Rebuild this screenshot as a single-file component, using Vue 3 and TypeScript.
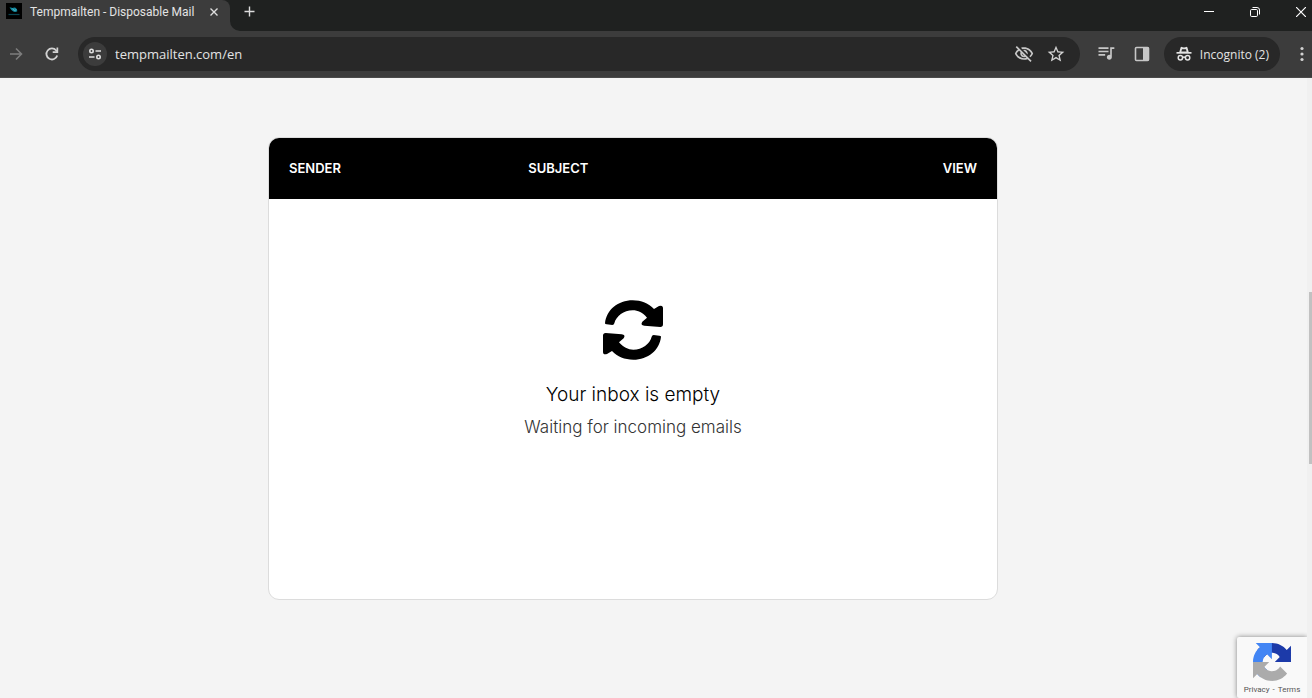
<script setup lang="ts">
import { ref } from 'vue'

const address = ref('tempmailten.com/en')
const tabTitle = 'Tempmailten - Disposable Mail'
const incognitoCount = 2
</script>

<template>
  <div class="browser">
    <header class="tabs">
      <div class="tab">
        <svg class="favicon" viewBox="0 0 16 16" aria-hidden="true">
          <rect width="16" height="16" fill="#000" />
          <path d="M3.500 4.200l3.200.8Q8 4 9.500 4.800 11.500 6 11.300 8.200 9.500 9.600 7.300 8.600 5 7 3.500 4.200z" fill="#128aa0" />
          <path d="M6.500 5.800l2 1.800 1.800-1" fill="none" stroke="#7cc4cf" stroke-width=".7" />
          <path d="M2.500 11.500h11" stroke="#0a4450" stroke-width="1.200" />
        </svg>
        <span class="title">{{ tabTitle }}</span>
        <button class="plain close-tab" type="button" aria-label="Close tab">
          <svg width="8" height="8" viewBox="0 0 8 8"><path d="M.5.5l7 7M7.500.5l-7 7" stroke="#dedede" stroke-width="1.400" /></svg>
        </button>
        <svg class="flare" width="10" height="10" viewBox="0 0 10 10" aria-hidden="true"><path d="M0 0a10 10 0 0 0 10 10H0z" fill="#3c3c3c" /></svg>
      </div>
      <button class="plain new-tab" type="button" aria-label="New tab">
        <svg width="12" height="12" viewBox="0 0 12 12"><path d="M5.500.5v10M.5 5.500h10" stroke="#dcdcdc" stroke-width="1.400" /></svg>
      </button>
      <div class="window-controls">
        <button class="plain" type="button" aria-label="Minimize">
          <svg width="10" height="10" viewBox="0 0 10 10"><path d="M0 4.500h10" stroke="#fff" /></svg>
        </button>
        <button class="plain" type="button" aria-label="Restore">
          <svg width="10" height="10" viewBox="0 0 10 10" fill="none" stroke="#fff"><rect x=".5" y="2.500" width="7" height="7" rx="1.200" /><path d="M2.500.5H7a2.500 2.500 0 0 1 2.500 2.500v4.500" /></svg>
        </button>
        <button class="plain" type="button" aria-label="Close window">
          <svg width="10" height="10" viewBox="0 0 10 10"><path d="M0 0l10 10M10 0L0 10" stroke="#fff" stroke-width="1.200" /></svg>
        </button>
      </div>
    </header>

    <nav class="toolbar" aria-label="Browser toolbar">
      <button class="plain tool" type="button" aria-label="Forward" disabled>
        <svg width="16" height="16" viewBox="0 0 16 16" fill="none" stroke="#7d7d7d" stroke-width="1.600"><path d="M2 8h11M8 2.500L13.500 8 8 13.500" /></svg>
      </button>
      <button class="plain tool reload" type="button" aria-label="Reload">
        <svg width="16" height="16" viewBox="0 0 16 16"><path d="M13.200 9.500A5.500 5.500 0 1 1 12.200 4.500L13 5.500" fill="none" stroke="#d2d2d2" stroke-width="1.800" /><path d="M14.200 1.500v5.500H8.700V5.300h3.800V1.500z" fill="#d2d2d2" /></svg>
      </button>
      <div class="omnibox">
        <button class="plain site-info" type="button" aria-label="Site information">
          <svg width="14" height="14" viewBox="0 0 14 14" fill="none" stroke="#dedede" stroke-width="1.600"><circle cx="3.500" cy="4" r="1.700" /><path d="M7.500 4H13M1 10h5.500" /><circle cx="10.500" cy="10" r="1.700" /></svg>
        </button>
        <input v-model="address" class="address" type="text" aria-label="Address" spellcheck="false" />
        <button class="plain field-icon" type="button" aria-label="Third-party cookies blocked">
          <svg width="20" height="20" viewBox="0 0 24 24" fill="#c7c7c7"><path d="M12 6c3.790 0 7.170 2.130 8.820 5.500-.59 1.220-1.420 2.270-2.410 3.120l1.410 1.410c1.390-1.230 2.490-2.770 3.180-4.530C21.270 7.110 17 4 12 4c-1.270 0-2.490.2-3.640.57l1.650 1.650C10.660 6.090 11.320 6 12 6zm-1.070 1.140L13 9.210c.57.25 1.030.71 1.280 1.280l2.070 2.070c.08-.34.14-.7.14-1.070C16.500 9.010 14.480 7 12 7c-.37 0-.72.05-1.070.14zM2.010 3.870l2.680 2.680C3.060 7.830 1.770 9.530 1 11.500 2.730 15.890 7 19 12 19c1.520 0 2.980-.29 4.320-.82l3.420 3.420 1.410-1.410L3.420 2.450 2.010 3.870zm7.500 7.500l2.610 2.610c-.04.01-.08.02-.12.02-1.380 0-2.500-1.120-2.500-2.500 0-.05.01-.08.01-.13zm-3.400-3.400l1.750 1.750c-.23.55-.36 1.150-.36 1.780 0 2.480 2.020 4.500 4.500 4.500.63 0 1.230-.13 1.770-.36l.98.98c-.88.24-1.800.38-2.750.38-3.790 0-7.170-2.130-8.820-5.500.7-1.430 1.720-2.610 2.930-3.530z" /></svg>
        </button>
        <button class="plain field-icon" type="button" aria-label="Bookmark this tab">
          <svg width="20" height="20" viewBox="0 0 24 24" fill="#d2d2d2"><path d="M22 9.240l-7.190-.62L12 2 9.190 8.630 2 9.240l5.460 4.730L5.820 21 12 17.270 18.180 21l-1.630-7.030L22 9.240zM12 15.400l-3.760 2.270 1-4.280-3.320-2.880 4.380-.38L12 6.100l1.710 4.040 4.380.38-3.320 2.880 1 4.280L12 15.400z" /></svg>
        </button>
      </div>
      <button class="plain tool" type="button" aria-label="Media controls">
        <svg width="20" height="20" viewBox="0 0 24 24" fill="#c7c7c7"><path d="M15 4H3v2h12V4zm0 4H3v2h12V8zM3 14h8v-2H3v2zM17 4v9.180c-.31-.11-.65-.18-1-.18-1.660 0-3 1.340-3 3s1.340 3 3 3 3-1.340 3-3V6h3V4h-5z" /></svg>
      </button>
      <button class="plain tool" type="button" aria-label="Side panel">
        <svg width="16" height="16" viewBox="0 0 16 16"><rect x="1.500" y="1.500" width="13" height="13" rx="1" fill="none" stroke="#c7c7c7" stroke-width="1.600" /><path d="M9 1h5.500v14H9z" fill="#c7c7c7" /></svg>
      </button>
      <button class="plain incognito" type="button">
        <svg width="16" height="16" viewBox="0 0 16 16" aria-hidden="true"><path d="M4.600 1.500q.3-.8 1.100-.6L8 1.500l2.300-.6q.8-.2 1.100.6L12.700 6H3.300z" fill="#e3e3e3" /><path d="M6 3.200h4l.6 2.200H5.400z" fill="#282828" /><path d="M.5 6h15v1.700H.5z" fill="#e3e3e3" /><g fill="none" stroke="#e3e3e3" stroke-width="1.500"><circle cx="4.400" cy="11.800" r="2.200" /><circle cx="11.600" cy="11.800" r="2.200" /><path d="M6.600 11.500q1.400-.8 2.800 0" /></g></svg>
        <span>Incognito ({{ incognitoCount }})</span>
      </button>
      <button class="plain more" type="button" aria-label="More">
        <svg width="4" height="16" viewBox="0 0 4 16" fill="#d2d2d2"><circle cx="2" cy="2.500" r="1.600" /><circle cx="2" cy="8" r="1.600" /><circle cx="2" cy="13.500" r="1.600" /></svg>
      </button>
    </nav>

    <main class="page">
      <div class="inbox">
        <table>
          <thead>
            <tr><th class="sender" scope="col">SENDER</th><th class="subject" scope="col">SUBJECT</th><th class="view" scope="col">VIEW</th></tr>
          </thead>
          <tbody>
            <tr>
              <td colspan="3">
                <div class="empty">
                  <svg class="refresh" width="62" height="62" viewBox="36 25 186 186" aria-hidden="true">
                    <g id="arrow"><path d="M45 98C49 58 84 29 128 29C154 29 176 38 192 55L207 46Q219 42 219 53V101Q219 109 211 109L163 105Q150 103 157 93L171 81C158 66 144 59 128 59C101 59 79 76 73 98Q72 103 67 103L50 101Q45 101 45 98Z" /></g>
                    <use href="#arrow" transform="rotate(180 129 118)" />
                  </svg>
                  <p class="headline">Your inbox is empty</p>
                  <p class="note">Waiting for incoming emails</p>
                </div>
              </td>
            </tr>
          </tbody>
        </table>
      </div>

      <aside class="recaptcha">
        <svg width="38" height="38" viewBox="0 0 64 64" aria-label="reCAPTCHA" role="img">
          <path fill="#1c3aa9" d="M64 31.955l-.033-1.370V4.687l-7.160 7.160C50.948 4.674 42.033.093 32.050.093c-10.400 0-19.622 4.960-25.458 12.640l11.736 11.860a15.550 15.550 0 0 1 4.754-5.334c2.050-1.600 4.952-2.906 8.968-2.906.485 0 .86.057 1.135.163 4.976.393 9.288 3.140 11.828 7.124l-8.307 8.307L64 31.953" />
          <path fill="#4285f4" d="M31.862.094l-1.370.033H4.594l7.160 7.160C4.580 13.147 0 22.060 0 32.046c0 10.400 4.960 19.622 12.640 25.458L24.500 45.768a15.550 15.550 0 0 1-5.334-4.754c-1.600-2.050-2.906-4.952-2.906-8.968 0-.485.057-.86.163-1.135.393-4.976 3.140-9.288 7.124-11.828l8.307 8.307L31.860.095" />
          <path fill="#ababab" d="M.001 32.045l.033 1.370v25.898l7.160-7.160c5.860 7.173 14.774 11.754 24.760 11.754 10.400 0 19.622-4.960 25.458-12.640l-11.736-11.860a15.550 15.550 0 0 1-4.754 5.334c-2.050 1.600-4.952 2.906-8.968 2.906-.485 0-.86-.057-1.135-.163-4.976-.393-9.288-3.140-11.828-7.124l8.307-8.307c-10.522.04-22.400.066-27.295-.005" />
        </svg>
        <div class="legal"><a href="#privacy">Privacy</a><span>-</span><a href="#terms">Terms</a></div>
      </aside>
      <div class="scroll-track"><div class="scroll-thumb"></div></div>
    </main>
  </div>
</template>

<style>
body { margin: 0; background: #f4f4f4; }
</style>

<style scoped>
* { box-sizing: border-box; }
.browser { display: flex; flex-direction: column; min-height: 100vh; overflow: hidden; font-family: "Open Sans", "Noto Sans", sans-serif; }
.plain { display: flex; align-items: center; justify-content: center; flex: none; padding: 0; border: 0; background: none; font: inherit; color: inherit; }
svg { display: block; flex: none; }

.tabs { display: flex; align-items: flex-start; height: 31px; background: #1f2120; color: #e3e3e3; }
.tab { position: relative; display: flex; align-items: flex-start; width: 230px; height: 31px; padding-left: 6px; background: #3c3c3c; border-radius: 0 8px 0 0; }
.favicon { width: 16px; height: 16px; margin-top: 3px; }
.title { flex: 1; margin-left: 8px; font-family: Roboto, sans-serif; font-size: 12px; line-height: 24px; white-space: nowrap; }
.close-tab { width: 16px; height: 24px; margin-right: 8px; }
.flare { position: absolute; left: 100%; bottom: 0; }
.new-tab { width: 24px; height: 24px; margin-left: 8px; }
.window-controls { display: flex; margin: 0 -12px 0 auto; }
.window-controls button { width: 46px; height: 24px; }

.toolbar { display: flex; align-items: center; height: 47px; background: #3c3c3c; border-bottom: 1px solid #4a4a4a; color: #e3e3e3; }
.tool { width: 36px; height: 34px; }
.toolbar > .tool:first-child { width: 32px; }
.toolbar > .reload { width: 40px; }
.omnibox { display: flex; align-items: center; flex: 1; height: 34px; margin: 0 8px 0 6px; padding: 0 8px 0 5px; border-radius: 17px; background: #282828; }
.site-info { width: 24px; height: 24px; border-radius: 50%; background: #3c3c3c; }
.address { flex: 1; min-width: 0; margin-left: 8px; padding: 0; border: 0; outline: 0; background: none; color: #e3e3e3; font: 13px/24px "Open Sans", "Noto Sans", sans-serif; }
.field-icon { width: 32px; height: 32px; }
.incognito { gap: 8px; height: 34px; margin-left: 4px; padding: 0 11px 0 12px; border-radius: 17px; background: #282828; font-size: 12px; white-space: nowrap; }
.more { width: 20px; height: 34px; margin-left: 12px; }

.page { position: relative; flex: 1; padding: 59px 46px 60px 0; background: #f4f4f4; font-family: Inter, "Open Sans", sans-serif; }
.inbox { width: 730px; max-width: 100%; margin: 0 auto; border: 1px solid #dcdcdc; border-radius: 11px; background: #fff; overflow: hidden; }
table { width: 100%; border-collapse: collapse; table-layout: fixed; }
th { padding: 20px; background: #000; color: #fff; font-size: 13px; font-weight: 600; line-height: 21px; text-align: left; }
.sender { width: 33%; }
.subject { padding-left: 19px; }
.view { width: 20%; text-align: right; }
td { padding: 0; }
.empty { display: flex; flex-direction: column; align-items: center; padding: 100px 20px 158px; }
.refresh { fill: #000; }
p { margin: 0; }
.headline { margin-top: 20px; color: #000; font-size: 19px; font-weight: 300; line-height: 28px; }
.note { margin-top: 4px; color: #333; font-size: 17px; font-weight: 300; line-height: 28px; }

.recaptcha { position: absolute; right: 5px; bottom: 0; display: flex; flex-direction: column; align-items: center; width: 70px; height: 61px; padding-top: 6px; border-radius: 2px 0 0 2px; background: #f9f9f9; box-shadow: 0 0 5px #808080; clip-path: inset(-6px 0 0 -6px); }
.legal { display: flex; gap: 3px; margin-top: 3px; color: #555; font: 8px/12px Roboto, sans-serif; }
.legal a { color: inherit; text-decoration: none; }
.scroll-track { position: absolute; top: 0; right: 0; bottom: 0; width: 5px; background: #f0f0f0; }
.scroll-thumb { height: 172px; margin: 214px 0 0 2px; background: #c1c1c1; }
</style>
